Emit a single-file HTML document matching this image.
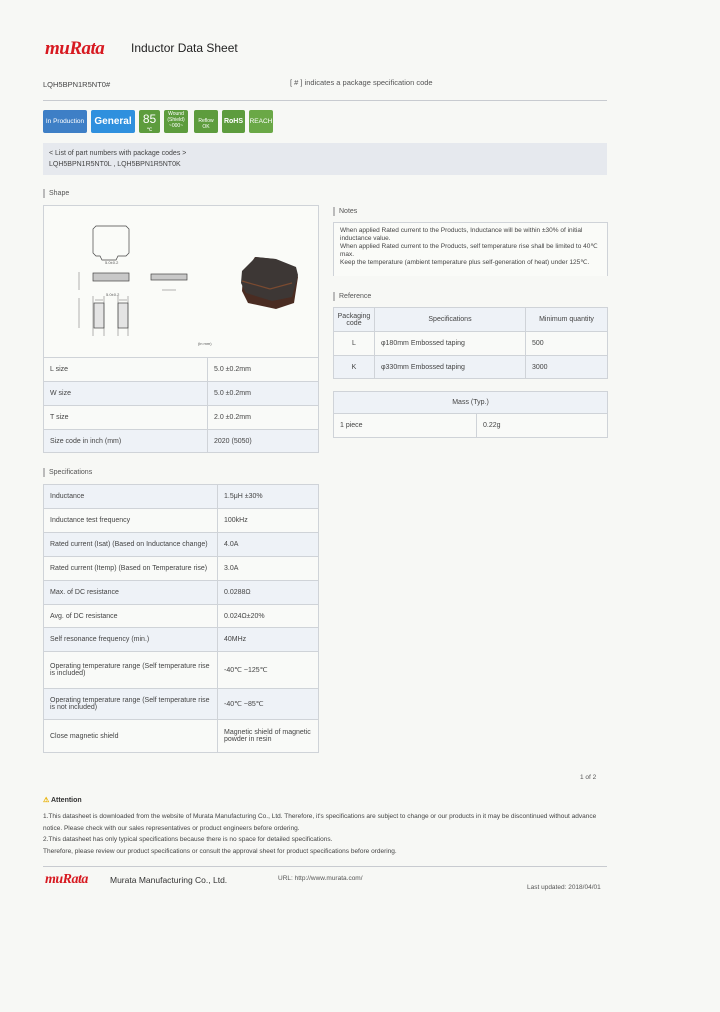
<!DOCTYPE html>
<html><head><meta charset="utf-8"><style>
*{margin:0;padding:0;box-sizing:border-box}
body{width:720px;height:1012px;background:#f7f8f5;font-family:"Liberation Sans",sans-serif;color:#333;position:relative;overflow:hidden;font-size:7px}
.a{position:absolute}
.logo{font-family:"Liberation Serif",serif;font-style:italic;font-weight:bold;color:#d71920;letter-spacing:-0.5px}
.hd{position:absolute;border-left:2px solid #bbb;padding-left:4px;font-size:7px;color:#555;line-height:9px}
table{border-collapse:collapse;position:absolute;font-size:7px;color:#444}
td{border:1px solid #cfd3d8;padding:0 6px}
tr.o td{background:#f9faf8}
tr.e td{background:#eef2f7}
.bd{position:absolute;top:110px;height:23px;color:#fff;text-align:center;border-radius:2px}
</style></head><body>
<div class="a logo" style="left:45px;top:38px;font-size:19px">muRata</div>
<div class="a" style="left:131px;top:41px;font-size:12px;color:#222">Inductor Data Sheet</div>
<div class="a" style="left:43px;top:80px;font-size:7.5px;color:#444">LQH5BPN1R5NT0#</div>
<div class="a" style="left:290px;top:78px;font-size:7.5px;color:#555">[ # ] indicates a package specification code</div>
<div class="a" style="left:43px;top:100px;width:564px;height:1px;background:#c8cbd0"></div>
<div class="bd" style="left:43px;width:44px;background:#3e7fc6;font-size:6.5px;line-height:23px">In Production</div>
<div class="bd" style="left:91px;width:44px;background:#2f90de;font-size:10px;font-weight:bold;line-height:23px">General</div>
<div class="bd" style="left:139px;width:21px;background:#5d9c3d;font-size:12px;line-height:18px">85<span style="font-size:5px;display:block;line-height:4px">℃</span></div>
<div class="bd" style="left:164px;width:24px;background:#5d9c3d;font-size:5px;line-height:6px;padding-top:1px">Wound<br>(Shield)<br>~000~</div>
<div class="bd" style="left:194px;width:24px;background:#5d9c3d;font-size:5px;line-height:6px;padding-top:8px">Reflow<br>OK</div>
<div class="bd" style="left:222px;width:23px;background:#5d9c3d;font-size:7px;font-weight:bold;line-height:23px">RoHS</div>
<div class="bd" style="left:249px;width:24px;background:#6aa846;font-size:6.5px;line-height:23px">REACH</div>
<div class="a" style="left:43px;top:143px;width:564px;height:32px;background:#e6e9ee;padding:5px 6px;font-size:7px;line-height:11px;color:#444">&lt; List of part numbers with package codes &gt;<br>LQH5BPN1R5NT0L , LQH5BPN1R5NT0K</div>
<div class="hd" style="left:43px;top:189px">Shape</div>
<div class="a" style="left:43px;top:205px;width:276px;height:153px;background:#fafbf8;border:1px solid #cfd3d8;border-bottom:none"></div>
<svg class="a" style="left:0;top:0" width="330" height="360" fill="none" stroke="#444" stroke-width="0.7">
<path d="M96 226h30l3 3v24l-3 3h-8l-2 4h-14l-2-4h-4l-3-3v-24z"/>
<rect x="93" y="273" width="36" height="8" fill="#c8c8c8"/>
<rect x="151" y="274" width="36" height="6" fill="#c8c8c8"/>
<rect x="94" y="303" width="10" height="25" fill="#e4e4e4"/>
<rect x="118" y="303" width="10" height="25" fill="#e4e4e4"/>
<path d="M93 296v40M104 296v40M118 296v40M128 296v40M95 300h8M119 300h8" stroke-width="0.4"/>
<path d="M79 272v18M79 298v30M162 290h14" stroke-width="0.4"/>
<text x="105" y="264" font-size="4" fill="#555" stroke="none" font-family="Liberation Sans">5.0±0.2</text>
<text x="106" y="296" font-size="4" fill="#555" stroke="none" font-family="Liberation Sans">5.0±0.2</text>
<text x="198" y="345" font-size="4" fill="#555" stroke="none" font-family="Liberation Sans">(in mm)</text>
</svg>
<svg class="a" style="left:238px;top:255px" width="62" height="56">
<path d="M5 20l12-18 20 2 20 8 3 10-4 26-18 6-28-6-6-12z" fill="#4a2c22"/>
<path d="M4 16l14-14 20 2 20 8 2 8-6 22-20 4-26-8-5-10z" fill="#3d3735"/>
<path d="M4 26l28 8 22-6" stroke="#7a4a30" stroke-width="1.2" fill="none"/>
</svg>
<table style="left:43px;top:357px;width:276px">
<tr class="o" style="height:24px"><td>L size</td><td style="width:111px">5.0 ±0.2mm</td></tr>
<tr class="e" style="height:24px"><td>W size</td><td>5.0 ±0.2mm</td></tr>
<tr class="o" style="height:24px"><td>T size</td><td>2.0 ±0.2mm</td></tr>
<tr class="e" style="height:23px"><td>Size code in inch (mm)</td><td>2020 (5050)</td></tr>
</table>
<div class="hd" style="left:43px;top:468px">Specifications</div>
<table style="left:43px;top:484px;width:276px">
<tr class="e" style="height:24px"><td>Inductance</td><td style="width:101px">1.5μH ±30%</td></tr>
<tr class="o" style="height:24px"><td>Inductance test frequency</td><td>100kHz</td></tr>
<tr class="e" style="height:24px"><td>Rated current (Isat) (Based on Inductance change)</td><td>4.0A</td></tr>
<tr class="o" style="height:24px"><td>Rated current (Itemp) (Based on Temperature rise)</td><td>3.0A</td></tr>
<tr class="e" style="height:24px"><td>Max. of DC resistance</td><td>0.0288Ω</td></tr>
<tr class="o" style="height:23px"><td>Avg. of DC resistance</td><td>0.024Ω±20%</td></tr>
<tr class="e" style="height:24px"><td>Self resonance frequency (min.)</td><td>40MHz</td></tr>
<tr class="o" style="height:37px"><td>Operating temperature range (Self temperature rise is included)</td><td>-40℃ ~125℃</td></tr>
<tr class="e" style="height:31px"><td>Operating temperature range (Self temperature rise is not included)</td><td>-40℃ ~85℃</td></tr>
<tr class="o" style="height:33px"><td>Close magnetic shield</td><td>Magnetic shield of magnetic powder in resin</td></tr>
</table>
<div class="hd" style="left:333px;top:207px">Notes</div>
<div class="a" style="left:333px;top:222px;width:275px;height:54px;background:#fafbf8;border:1px solid #cfd3d8;border-bottom:none;padding:4px 6px;font-size:6.5px;line-height:8px;color:#444">When applied Rated current to the Products, Inductance will be within ±30% of initial inductance value.<br>When applied Rated current to the Products, self temperature rise shall be limited to 40℃ max.<br>Keep the temperature (ambient temperature plus self-generation of heat) under 125℃.</div>
<div class="hd" style="left:333px;top:292px">Reference</div>
<table style="left:333px;top:307px;width:275px;text-align:center">
<tr class="e" style="height:24px"><td style="width:41px;padding:0">Packaging code</td><td>Specifications</td><td style="width:82px">Minimum quantity</td></tr>
<tr class="o" style="height:24px"><td>L</td><td style="text-align:left">φ180mm Embossed taping</td><td style="text-align:left">500</td></tr>
<tr class="e" style="height:23px"><td>K</td><td style="text-align:left">φ330mm Embossed taping</td><td style="text-align:left">3000</td></tr>
</table>
<table style="left:333px;top:391px;width:275px">
<tr class="e" style="height:22px"><td colspan="2" style="text-align:center">Mass (Typ.)</td></tr>
<tr class="o" style="height:24px"><td>1 piece</td><td style="width:131px">0.22g</td></tr>
</table>
<div class="a" style="left:580px;top:774px;font-size:6.5px;color:#555">1 of 2</div>
<div class="a" style="left:43px;top:796px;font-size:7px;font-weight:bold;color:#333"><span style="color:#e8b000">⚠</span> Attention</div>
<div class="a" style="left:43px;top:811px;width:570px;font-size:6.5px;line-height:11.5px;color:#444">1.This datasheet is downloaded from the website of Murata Manufacturing Co., Ltd. Therefore, it's specifications are subject to change or our products in it may be discontinued without advance notice. Please check with our sales representatives or product engineers before ordering.<br>2.This datasheet has only typical specifications because there is no space for detailed specifications.<br>Therefore, please review our product specifications or consult the approval sheet for product specifications before ordering.</div>
<div class="a" style="left:43px;top:866px;width:564px;height:1px;background:#c8cbd0"></div>
<div class="a logo" style="left:45px;top:872px;font-size:14px">muRata</div>
<div class="a" style="left:110px;top:875px;font-size:8.5px;color:#333">Murata Manufacturing Co., Ltd.</div>
<div class="a" style="left:278px;top:875px;font-size:6.5px;color:#555">URL: http://www.murata.com/</div>
<div class="a" style="left:527px;top:884px;font-size:6.5px;color:#555">Last updated: 2018/04/01</div>
</body></html>
